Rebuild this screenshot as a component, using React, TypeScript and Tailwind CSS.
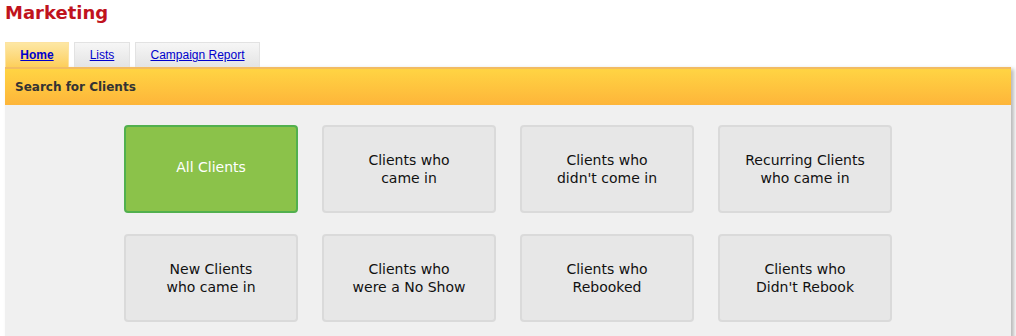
import React, { useState } from 'react';

const tabs = [
  { label: 'Home', width: 'w-[64px]' },
  { label: 'Lists', width: 'w-[56px]' },
  { label: 'Campaign Report', width: 'w-[125px]' },
];

const searches = [
  ['All Clients'],
  ['Clients who', 'came in'],
  ['Clients who', "didn't come in"],
  ['Recurring Clients', 'who came in'],
  ['New Clients', 'who came in'],
  ['Clients who', 'were a No Show'],
  ['Clients who', 'Rebooked'],
  ['Clients who', "Didn't Rebook"],
];

const App = () => {
  const [activeTab, setActiveTab] = useState('Home');
  const [selected, setSelected] = useState(0);

  return (
    <div className="w-[1016px] h-[336px] overflow-hidden bg-white font-['Verdana','DejaVu_Sans',sans-serif]">
      {/* Title */}
      <h1 className="pl-[5px] pt-[2px] text-[18px] leading-[22px] font-bold text-[#c0131d]">Marketing</h1>

      {/* Tabs */}
      <div className="flex gap-[5px] pl-[5px] mt-[18px] h-[25px] font-['Liberation_Sans',Arial,sans-serif] text-[12px]">
        {tabs.map((tab) => (
          <button
            key={tab.label}
            onClick={() => setActiveTab(tab.label)}
            className={`${tab.width} h-[25px] flex items-center justify-center border border-b-0 ${
              activeTab === tab.label
                ? 'bg-gradient-to-b from-[#fde7a3] to-[#fdcf5a] border-[#fde3a0] font-bold text-[#0000cc]'
                : 'bg-gradient-to-b from-[#f6f6f6] to-[#e4e4e4] border-[#e2e2e2] text-[#0000cc]'
            }`}
          >
            <span className="underline">{tab.label}</span>
          </button>
        ))}
      </div>

      {/* Panel */}
      <div className="ml-[5px] w-[1006px] bg-[#f0f0f0] shadow-[3px_2px_4px_rgba(0,0,0,0.28)]">
        <div className="h-[38px] border-t-2 border-[#f2bc62] bg-gradient-to-b from-[#ffd443] to-[#fdb53a] flex items-center pl-[10px]">
          <span className="text-[12px] font-bold text-[#333]">Search for Clients</span>
        </div>

        <div className="pt-[20px] pb-[20px] flex justify-center">
          <div className="grid grid-cols-4 gap-x-[24px] gap-y-[21px]">
            {searches.map((lines, i) => (
              <button
                key={i}
                onClick={() => setSelected(i)}
                className={`w-[174px] h-[88px] rounded-[4px] border-2 flex flex-col items-center justify-center text-[14px] leading-[18px] ${
                  selected === i
                    ? 'bg-[#8bc24a] border-[#52b04e] text-white pb-[4px]'
                    : 'bg-[#e7e7e7] border-[#dadada] text-[#111]'
                }`}
              >
                {lines.map((l) => (
                  <span key={l}>{l}</span>
                ))}
              </button>
            ))}
          </div>
        </div>
      </div>
    </div>
  );
};

export default App;
